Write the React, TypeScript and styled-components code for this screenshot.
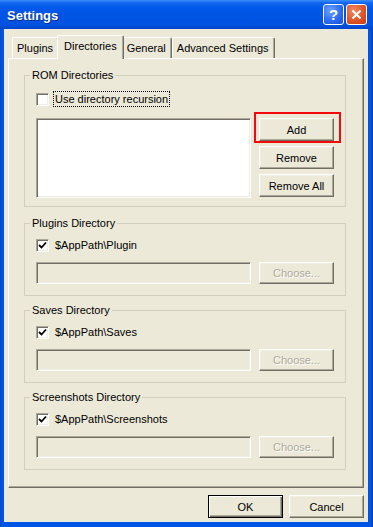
import React from "react";
import styled, { createGlobalStyle, css } from "styled-components";

const Global = createGlobalStyle`
  html, body { margin: 0; padding: 0; background: #ECE9D8; overflow: hidden; }
  * { box-sizing: border-box; }
`;

const FONT = `"Liberation Sans", Arial, sans-serif`;

const Window = styled.div`
  width: 373px;
  height: 527px;
  display: flex;
  flex-direction: column;
  background: linear-gradient(90deg, #0846C8 0, #0055E5 2px, #0055E5 calc(100% - 2px), #0036A8 100%);
  padding: 0 5px 5px 4px;
  font-family: ${FONT};
  font-size: 11px;
  color: #000;
`;

const TitleBar = styled.div`
  height: 29px;
  margin: 0 -5px 0 -4px;
  padding: 0 6px 0 7px;
  display: flex;
  align-items: center;
  background: linear-gradient(
    180deg,
    #3C8DF8 0,
    #1266F0 3px,
    #0058EA 8px,
    #0055E5 50%,
    #0052E0 85%,
    #0046CC 100%
  );
`;

const Title = styled.div`
  flex: 1;
  color: #fff;
  font-weight: bold;
  font-size: 13px;
  text-shadow: 1px 1px 0 #0A2D8C;
  padding-top: 1px;
`;

const Caption = styled.div`
  display: flex;
  gap: 2px;
`;

const CapBtn = styled.div<{ $kind: "help" | "close" }>`
  width: 21px;
  height: 21px;
  border: 1px solid #fff;
  border-radius: 3px;
  display: flex;
  align-items: center;
  justify-content: center;
  color: #fff;
  font-weight: bold;
  font-size: 15px;
  ${(p) =>
    p.$kind === "help"
      ? css`
          background: radial-gradient(circle at 35% 30%, #6FA2FF 0, #2C6CF2 55%, #1A4FD4 100%);
        `
      : css`
          background: radial-gradient(circle at 35% 30%, #F08C6A 0, #E05528 55%, #C33A10 100%);
        `}
`;

const Client = styled.div`
  flex: 1;
  background: #ECE9D8;
  padding: 6px 4px 0 4px;
  display: flex;
  flex-direction: column;
`;

const TabStrip = styled.div`
  height: 23px;
  display: flex;
  align-items: flex-end;
  padding-left: 4px;
`;

const Tab = styled.div<{ $active?: boolean }>`
  height: 21px;
  padding: 3px 5px 0 4px;
  line-height: 15px;
  background: #ECE9D8;
  border-top: 1px solid #fff;
  border-left: 1px solid #fff;
  border-right: 1px solid #716F64;
  border-radius: 2px 2px 0 0;
  box-shadow: inset -1px 0 0 #ACA899;
  white-space: nowrap;
  ${(p) =>
    p.$active &&
    css`
      height: 24px;
      margin: 0 -2px -1px -2px;
      padding: 3px 6px 0 6px;
      position: relative;
      z-index: 1;
    `}
`;

const Panel = styled.div`
  height: 430px;
  border: 1px solid;
  border-color: #fff #716F64 #716F64 #fff;
  box-shadow: inset -1px -1px 0 #ACA899;
  padding: 10px 17px 0 15px;
  display: flex;
  flex-direction: column;
  gap: 8px;
`;

const Group = styled.fieldset<{ $rom?: boolean }>`
  margin: 0 0 ${(p) => (p.$rom ? "2px" : "0")} 0;
  border: 1px solid #D0D0BF;
  padding: 0 11px ${(p) => (p.$rom ? "8px" : "11px")} 11px;
  min-width: 0;
`;

const Legend = styled.legend`
  padding: 0 2px;
  margin-left: -6px;
  line-height: 13px;
  font-size: 11px;
`;

const CheckRow = styled.div<{ $top: number }>`
  display: flex;
  align-items: center;
  height: 16px;
  margin-top: ${(p) => p.$top}px;
`;

const Box = styled.div`
  width: 13px;
  height: 13px;
  background: #fff;
  border: 1px solid;
  border-color: #ACA899 #fff #fff #ACA899;
  box-shadow: inset 1px 1px 0 #716F64, inset -1px -1px 0 #F1EFE2;
  display: flex;
  align-items: center;
  justify-content: center;
`;

const CheckLabel = styled.span<{ $focus?: boolean }>`
  margin-left: 4px;
  padding: 0 1px;
  line-height: 14px;
  border: 1px dotted ${(p) => (p.$focus ? "#000" : "transparent")};
`;

const ListRow = styled.div`
  display: flex;
  gap: 8px;
  margin-top: 11px;
`;

const Sunken = styled.div<{ $white?: boolean; $h: number }>`
  width: 215px;
  height: ${(p) => p.$h}px;
  background: ${(p) => (p.$white ? "#fff" : "#ECE9D8")};
  border: 1px solid;
  border-color: #ACA899 #fff #fff #ACA899;
  box-shadow: inset 1px 1px 0 #716F64, inset -1px -1px 0 #F1EFE2;
`;

const BtnCol = styled.div`
  display: flex;
  flex-direction: column;
  gap: 5px;
`;

const Button = styled.div<{ $disabled?: boolean; $default?: boolean; $h?: number }>`
  width: 75px;
  height: ${(p) => p.$h ?? 23}px;
  display: flex;
  align-items: center;
  justify-content: center;
  background: #ECE9D8;
  border: 1px solid;
  border-color: #fff #716F64 #716F64 #fff;
  box-shadow: inset -1px -1px 0 #ACA899, inset 1px 1px 0 #F1EFE2;
  color: ${(p) => (p.$disabled ? "#ACA899" : "#000")};
  text-shadow: ${(p) => (p.$disabled ? "1px 1px 0 #fff" : "none")};
  position: relative;
  ${(p) =>
    p.$default &&
    css`
      border-color: #000;
      box-shadow: inset 1px 1px 0 #fff, inset -1px -1px 0 #716F64, inset -2px -2px 0 #ACA899;
    `}
`;

const Highlight = styled.div`
  position: absolute;
  top: -7px;
  left: -6px;
  right: -8px;
  bottom: -3px;
  border: 2px solid #F00A0A;
  pointer-events: none;
`;

const FieldRow = styled.div`
  display: flex;
  gap: 8px;
  margin-top: 9px;
`;

const Footer = styled.div`
  display: flex;
  justify-content: flex-end;
  gap: 6px;
  margin-top: 7px;
`;

const Check = () => (
  <svg width="9" height="9" viewBox="0 0 9 9">
    <polyline points="1,4 3.5,6.5 8,1.5" fill="none" stroke="#000" strokeWidth="1.8" />
  </svg>
);

const DirGroup = ({ title, path }: { title: string; path: string }) => (
  <Group>
    <Legend>{title}</Legend>
    <CheckRow $top={7}>
      <Box>
        <Check />
      </Box>
      <CheckLabel>{path}</CheckLabel>
    </CheckRow>
    <FieldRow>
      <Sunken $h={22} />
      <Button $disabled $h={22}>
        Choose...
      </Button>
    </FieldRow>
  </Group>
);

export default function App() {
  return (
    <>
      <Global />
      <Window>
        <TitleBar>
          <Title>Settings</Title>
          <Caption>
            <CapBtn $kind="help">?</CapBtn>
            <CapBtn $kind="close">
              <svg width="11" height="11" viewBox="0 0 11 11">
                <path d="M1.5 1.5 L9.5 9.5 M9.5 1.5 L1.5 9.5" stroke="#fff" strokeWidth="2" />
              </svg>
            </CapBtn>
          </Caption>
        </TitleBar>
        <Client>
          <TabStrip>
            <Tab>Plugins</Tab>
            <Tab $active>Directories</Tab>
            <Tab>General</Tab>
            <Tab>Advanced Settings</Tab>
          </TabStrip>
          <Panel>
            <Group $rom>
              <Legend>ROM Directories</Legend>
              <CheckRow $top={9}>
                <Box />
                <CheckLabel $focus>Use directory recursion</CheckLabel>
              </CheckRow>
              <ListRow>
                <Sunken $white $h={80} />
                <BtnCol>
                  <Button>
                    Add
                    <Highlight />
                  </Button>
                  <Button>Remove</Button>
                  <Button>Remove All</Button>
                </BtnCol>
              </ListRow>
            </Group>
            <DirGroup title="Plugins Directory" path="$AppPath\Plugin" />
            <DirGroup title="Saves Directory" path="$AppPath\Saves" />
            <DirGroup title="Screenshots Directory" path="$AppPath\Screenshots" />
          </Panel>
          <Footer>
            <Button $default>OK</Button>
            <Button>Cancel</Button>
          </Footer>
        </Client>
      </Window>
    </>
  );
}
